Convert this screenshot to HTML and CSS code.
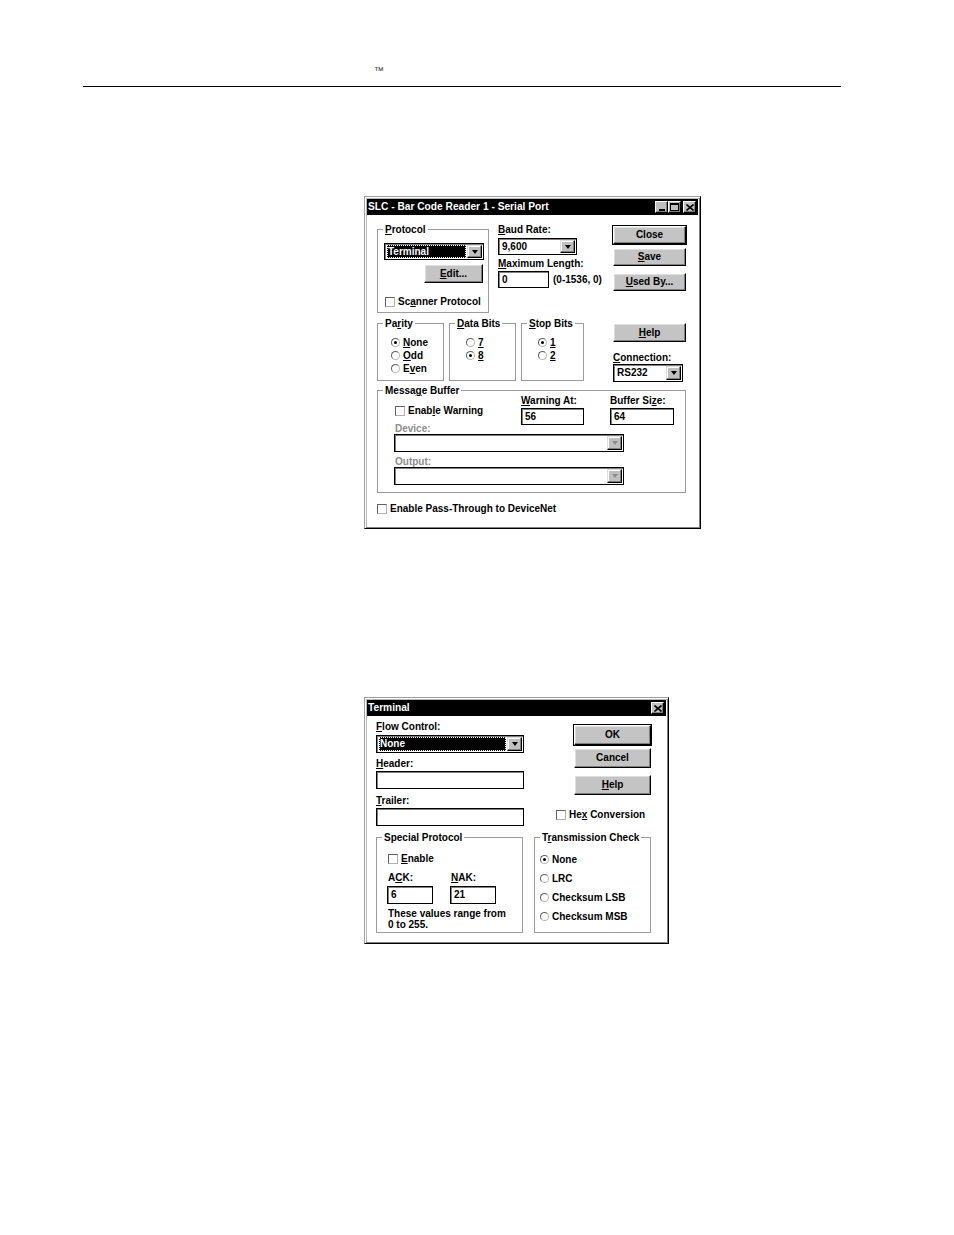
FILE: index.html
```html
<!DOCTYPE html>
<html>
<head>
<meta charset="utf-8">
<title>Serial Port</title>
<link rel="stylesheet" href="styles.css">
</head>
<body>
<div class="page">
  <header class="running-head">
    <div class="tm-line"><span class="tm">™</span></div>
    <hr class="rule">
  </header>

  <section class="win win1">
    <div class="titlebar">
      <span class="title">SLC - Bar Code Reader 1 - Serial Port</span>
      <span class="tbtns">
        <span class="tb"><span class="g-min"></span></span>
        <span class="tb"><span class="g-max"></span></span>
        <span class="tb tb-close"><svg width="8" height="7" viewBox="0 0 8 7"><path d="M0.5 0.5 L7.5 6.5 M7.5 0.5 L0.5 6.5" stroke="#000" stroke-width="1.6" fill="none"/></svg></span>
      </span>
    </div>
    <div class="body1">
      <div class="row r1">
        <fieldset class="group g-protocol">
          <legend><u>P</u>rotocol</legend>
          <div class="combo c-protocol"><span class="combo-val sel">Terminal</span><span class="ddbtn"></span></div>
          <div class="btn btn-edit"><u>E</u>dit...</div>
          <div class="chk chk-scan"><span class="box"></span><span>Sc<u>a</u>nner Protocol</span></div>
        </fieldset>
        <div class="col baud">
          <div class="lbl"><u>B</u>aud Rate:</div>
          <div class="combo c-baud"><span class="combo-val">9,600</span><span class="ddbtn"></span></div>
          <div class="lbl l-max"><u>M</u>aximum Length:</div>
          <div class="maxlen"><div class="field f-max">0</div><span class="range">(0-1536, 0)</span></div>
        </div>
        <div class="col btns">
          <div class="btn def b-close">Close</div>
          <div class="btn b-save"><u>S</u>ave</div>
          <div class="btn b-used"><u>U</u>sed By...</div>
        </div>
      </div>

      <div class="row r2">
        <fieldset class="group g-parity">
          <legend>Pa<u>r</u>ity</legend>
          <div class="radios rad-parity">
            <div class="radio"><span class="dot on"></span><u>N</u>one</div>
            <div class="radio"><span class="dot"></span><u>O</u>dd</div>
            <div class="radio"><span class="dot"></span>E<u>v</u>en</div>
          </div>
        </fieldset>
        <fieldset class="group g-data">
          <legend><u>D</u>ata Bits</legend>
          <div class="radios rad-bits">
            <div class="radio"><span class="dot"></span><u>7</u></div>
            <div class="radio"><span class="dot on"></span><u>8</u></div>
          </div>
        </fieldset>
        <fieldset class="group g-stop">
          <legend><u>S</u>top Bits</legend>
          <div class="radios rad-bits">
            <div class="radio"><span class="dot on"></span><u>1</u></div>
            <div class="radio"><span class="dot"></span><u>2</u></div>
          </div>
        </fieldset>
        <div class="col conn">
          <div class="btn b-help"><u>H</u>elp</div>
          <div class="lbl l-conn"><u>C</u>onnection:</div>
          <div class="combo c-conn"><span class="combo-val">RS232</span><span class="ddbtn"></span></div>
        </div>
      </div>

      <fieldset class="group g-msg">
        <legend>Messa<u>g</u>e Buffer</legend>
        <div class="msg-in">
          <div class="msg-top">
            <div class="mb-left"><div class="chk"><span class="box"></span><span>Enab<u>l</u>e Warning</span></div></div>
            <div class="mb-col"><div class="lbl"><u>W</u>arning At:</div><div class="field f-num">56</div></div>
            <div class="mb-col mb-col2"><div class="lbl">Buffer Si<u>z</u>e:</div><div class="field f-num">64</div></div>
          </div>
          <div class="lbl dis">Device:</div>
          <div class="combo dis c-wide"><span class="combo-val"></span><span class="ddbtn"></span></div>
          <div class="lbl dis l-out">Output:</div>
          <div class="combo dis c-wide"><span class="combo-val"></span><span class="ddbtn"></span></div>
        </div>
      </fieldset>

      <div class="chk pass"><span class="box"></span><span>Enable Pass-Through to DeviceNet</span></div>
    </div>
  </section>

  <section class="win win2">
    <div class="titlebar">
      <span class="title">Terminal</span>
      <span class="tbtns">
        <span class="tb"><svg width="8" height="7" viewBox="0 0 8 7"><path d="M0.5 0.5 L7.5 6.5 M7.5 0.5 L0.5 6.5" stroke="#000" stroke-width="1.6" fill="none"/></svg></span>
      </span>
    </div>
    <div class="body2">
      <div class="t-left">
        <div class="lbl"><u>F</u>low Control:</div>
        <div class="combo c-flow"><span class="combo-val sel">None</span><span class="ddbtn"></span></div>
        <div class="lbl l-header"><u>H</u>eader:</div>
        <div class="field f-wide"></div>
        <div class="lbl l-trailer"><u>T</u>railer:</div>
        <div class="field f-wide"></div>
        <fieldset class="group g-special">
          <legend>Special Protocol</legend>
          <div class="sp-in">
            <div class="chk"><span class="box"></span><span><u>E</u>nable</span></div>
            <div class="acknak">
              <div class="an-col"><div class="lbl">A<u>C</u>K:</div><div class="field f-ack">6</div></div>
              <div class="an-col"><div class="lbl"><u>N</u>AK:</div><div class="field f-ack">21</div></div>
            </div>
            <p class="note">These values range from<br>0 to 255.</p>
          </div>
        </fieldset>
      </div>
      <div class="t-right">
        <div class="btn def b-ok">OK</div>
        <div class="btn b-cancel">Cancel</div>
        <div class="btn b-help2"><u>H</u>elp</div>
        <div class="chk hex"><span class="box"></span><span>He<u>x</u> Conversion</span></div>
        <fieldset class="group g-trans">
          <legend>T<u>r</u>ansmission Check</legend>
          <div class="tr-in">
            <div class="radio"><span class="dot on"></span>None</div>
            <div class="radio"><span class="dot"></span>LRC</div>
            <div class="radio"><span class="dot"></span>Checksum LSB</div>
            <div class="radio"><span class="dot"></span>Checksum MSB</div>
          </div>
        </fieldset>
      </div>
    </div>
  </section>
</div>
</body>
</html>
```

FILE: styles.css
```css
* { box-sizing: border-box; }
html, body { margin: 0; background: #fff; }
body {
  font: bold 10px/11px "Liberation Sans", Arial, sans-serif;
  color: #000;
}
u { text-decoration: underline; text-decoration-thickness: 1px; text-underline-offset: 1px; }

.page { width: 954px; height: 1235px; overflow: hidden; }

/* running head */
.running-head { height: 87px; padding-top: 66px; }
.tm-line { padding-left: 374px; height: 10px; font: normal 10px/10px "Liberation Sans", Arial, sans-serif; color: #333; }
.rule { margin: 10px 0 0 83px; width: 758px; height: 0; border: 0; border-top: 1px solid #000; }

/* windows */
.win {
  border: 1px solid;
  border-color: #a0a0a0 #000 #000 #a0a0a0;
  padding: 2px;
  background: #fff;
  box-shadow: inset 1px 1px 0 #fff, inset -1px -1px 0 #808080, inset 2px 2px 0 #b8b8b8;
}
.win1 { margin: 109px 0 0 364px; width: 337px; height: 333px; }
.win2 { margin: 168px 0 0 364px; width: 305px; height: 247px; }

.titlebar {
  height: 16px;
  background: #000;
  color: #fff;
  display: flex;
  align-items: center;
  justify-content: space-between;
  padding: 0 2px 0 1px;
}
.title { font: bold 10.2px/12px "Liberation Sans", Arial, sans-serif; white-space: nowrap; }
.tbtns { display: flex; }
.tb {
  width: 13px; height: 12px;
  background: #c0c0c0;
  border: 1px solid;
  border-color: #fff #000 #000 #fff;
  box-shadow: inset -1px -1px 0 #808080;
  display: flex; align-items: center; justify-content: center;
}
.tb-close { margin-left: 2px; }
.g-min { width: 6px; height: 2px; background: #000; margin-top: 5px; }
.g-max { width: 9px; height: 8px; border: 1px solid #000; border-top-width: 2px; }

/* common controls */
.row { display: flex; align-items: flex-start; }
.lbl { height: 11px; line-height: 11px; white-space: nowrap; }
.lbl.dis { color: #8c8c8c; padding-left: 1px; }

.group { margin: 0; padding: 0; border: 1px solid #9c9c9c; min-width: 0; }
.group > legend { padding: 0 2px; margin-left: 5px; height: 11px; line-height: 11px; white-space: nowrap; }

.combo {
  display: flex;
  height: 17px;
  border: 1px solid #000;
  box-shadow: inset 1px 1px 0 #808080;
  background: #fff;
  padding: 1px 1px 1px 2px;
}
.combo-val { flex: 1; line-height: 13px; padding-left: 1px; white-space: nowrap; }
.combo-val.sel { background: #000; color: #fff; outline: 1px dotted #fff; outline-offset: -1px; margin-right: 1px; }
.ddbtn {
  width: 15px;
  background: #c0c0c0;
  border: 1px solid;
  border-color: #dfdfdf #000 #000 #dfdfdf;
  box-shadow: inset -1px -1px 0 #808080, inset 1px 1px 0 #fff;
  display: flex; align-items: center; justify-content: center;
}
.ddbtn::before {
  content: "";
  border-left: 3.5px solid transparent;
  border-right: 3.5px solid transparent;
  border-top: 4px solid #000;
}
.combo.dis .ddbtn::before { border-top-color: #8c8c8c; }

.field {
  height: 17px;
  border: 1px solid #000;
  box-shadow: inset 1px 1px 0 #808080;
  background: #fff;
  padding: 0 3px;
  line-height: 15px;
}

.btn {
  height: 18px;
  background: #c4c4c4;
  border: 1px solid;
  border-color: #fff #000 #000 #fff;
  box-shadow: inset -1px -1px 0 #808080, inset 1px 1px 0 #dfdfdf;
  text-align: center;
  line-height: 16px;
  white-space: nowrap;
}
.btn.def { outline: 1px solid #000; }

.chk { display: flex; align-items: center; height: 11px; white-space: nowrap; }
.box {
  width: 10px; height: 10px;
  border: 1px solid;
  border-color: #606060 #b0b0b0 #b0b0b0 #606060;
  background: #fff;
  margin-right: 3px;
  flex: none;
}

.radio { display: flex; align-items: center; height: 13px; white-space: nowrap; }
.dot {
  width: 9px; height: 9px;
  border-radius: 50%;
  border: 1px solid;
  border-color: #606060 #b8b8b8 #b8b8b8 #606060;
  margin-right: 3px;
  display: flex; align-items: center; justify-content: center;
  flex: none;
}
.dot.on::before { content: ""; width: 3px; height: 3px; border-radius: 50%; background: #000; }

/* dialog 1 */
.body1 { padding: 9px 0 0 10px; }
.g-protocol { width: 112px; height: 89px; }
.c-protocol { width: 100px; margin: 8px 0 0 6px; }
.btn-edit { width: 59px; height: 19px; margin: 4px 0 0 46px; line-height: 17px; }
.chk-scan { margin: 13px 0 0 7px; }

.baud { margin-left: 9px; width: 105px; }
.c-baud { width: 79px; margin-top: 3px; }
.l-max { margin-top: 3px; }
.maxlen { display: flex; align-items: center; margin-top: 2px; }
.f-max { width: 51px; }
.range { margin-left: 4px; white-space: nowrap; }

.btns { margin-left: 10px; width: 73px; }
.b-close { margin-top: 2px; }
.b-save { margin-top: 4px; }
.b-used { margin-top: 7px; }

.r2 { margin-top: 5px; }
.g-parity, .g-data { width: 67px; height: 63px; }
.g-data { margin-left: 5px; }
.g-stop { width: 63px; height: 63px; margin-left: 5px; }
.radios { padding-top: 7px; }
.rad-parity { padding-left: 13px; }
.rad-bits { padding-left: 16px; }

.conn { margin-left: 29px; width: 73px; }
.b-help { margin-top: 5px; height: 19px; line-height: 17px; }
.l-conn { margin-top: 10px; }
.c-conn { width: 70px; height: 18px; margin-top: 1px; }

.g-msg { width: 309px; height: 108px; margin-top: 3px; }
.msg-in { padding-left: 16px; margin-top: -1px; }
.msg-top { display: flex; height: 28px; }
.mb-left { width: 127px; padding: 10px 0 0 1px; }
.mb-col { width: 63px; }
.mb-col .field { margin-top: 2px; }
.mb-col2 { margin-left: 26px; width: 64px; }
.c-wide { width: 230px; height: 18px; }
.l-out { margin-top: 4px; }

.pass { margin-top: 10px; }

/* dialog 2 */
.body2 { display: flex; padding: 5px 0 0 9px; }
.t-left { width: 148px; }
.c-flow { width: 148px; height: 18px; margin-top: 3px; }
.l-header { margin-top: 5px; }
.l-trailer { margin-top: 6px; }
.f-wide { width: 148px; height: 18px; margin-top: 2px; }
.g-special { width: 147px; height: 101px; margin-top: 6px; }
.sp-in { padding: 10px 0 0 11px; }
.acknak { display: flex; margin-top: 8px; }
.an-col { width: 63px; }
.f-ack { width: 46px; height: 18px; margin: 3px 0 0 -1px; }
.note { margin: 4px 0 0; line-height: 11px; }

.t-right { margin-left: 10px; width: 117px; }
.t-right > .btn { margin-left: 40px; width: 77px; height: 20px; line-height: 18px; }
.b-ok { margin-top: 4px; }
.b-cancel { margin-top: 3px; }
.b-help2 { margin-top: 7px; }
.hex { margin: 14px 0 0 22px; }
.g-trans { width: 117px; height: 101px; margin-top: 12px; }
.tr-in { padding: 7px 0 0 5px; }
.tr-in .radio { height: 19px; }
```
